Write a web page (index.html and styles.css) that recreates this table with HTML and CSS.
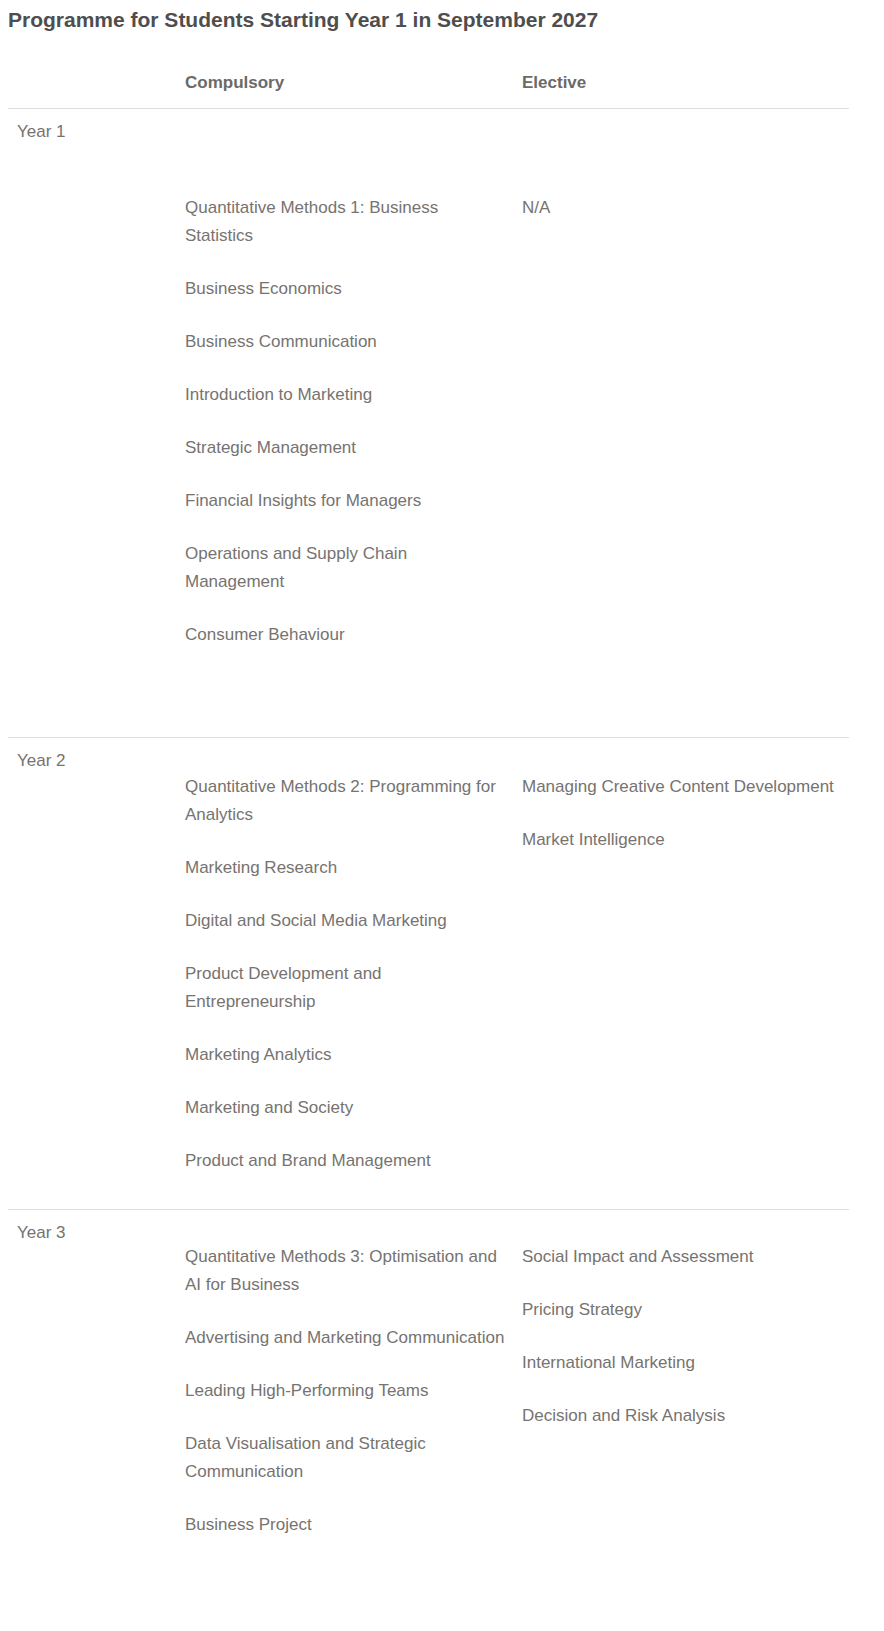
FILE: index.html
```html
<!DOCTYPE html>
<html lang="en">
<head>
<meta charset="utf-8">
<title>Programme for Students Starting Year 1 in September 2027</title>
<link rel="stylesheet" href="styles.css">
</head>
<body>
<h2 class="title">Programme for Students Starting Year 1 in September 2027</h2>
<div class="table">
  <div class="row head">
    <div class="cell year"></div>
    <div class="cell comp">Compulsory</div>
    <div class="cell elec">Elective</div>
  </div>
  <div class="row year1">
    <div class="cell year">Year 1</div>
    <div class="cell comp">
      <p>Quantitative Methods 1: Business Statistics</p>
      <p>Business Economics</p>
      <p>Business Communication</p>
      <p>Introduction to Marketing</p>
      <p>Strategic Management</p>
      <p>Financial Insights for Managers</p>
      <p>Operations and Supply Chain Management</p>
      <p>Consumer Behaviour</p>
    </div>
    <div class="cell elec">
      <p>N/A</p>
    </div>
  </div>
  <div class="row">
    <div class="cell year">Year 2</div>
    <div class="cell comp">
      <p>Quantitative Methods 2: Programming for Analytics</p>
      <p>Marketing Research</p>
      <p>Digital and Social Media Marketing</p>
      <p>Product Development and Entrepreneurship</p>
      <p>Marketing Analytics</p>
      <p>Marketing and Society</p>
      <p>Product and Brand Management</p>
    </div>
    <div class="cell elec">
      <p>Managing Creative Content Development</p>
      <p>Market Intelligence</p>
    </div>
  </div>
  <div class="row year3">
    <div class="cell year">Year 3</div>
    <div class="cell comp">
      <p>Quantitative Methods 3: Optimisation and AI for Business</p>
      <p>Advertising and Marketing Communication</p>
      <p>Leading High-Performing Teams</p>
      <p>Data Visualisation and Strategic Communication</p>
      <p>Business Project</p>
    </div>
    <div class="cell elec">
      <p>Social Impact and Assessment</p>
      <p>Pricing Strategy</p>
      <p>International Marketing</p>
      <p>Decision and Risk Analysis</p>
    </div>
  </div>
</div>
</body>
</html>
```

FILE: styles.css
```css
html, body {
  background: #ffffff;
}
body {
  margin: 8px;
  font-family: "Liberation Sans", Arial, sans-serif;
  color: #767370;
  font-size: 17px;
  line-height: 28px;
}
.title {
  margin: 0;
  font-size: 21px;
  line-height: 24px;
  font-weight: bold;
  color: #4e4e4e;
}
.table {
  width: 841px;
}
.row {
  display: grid;
  grid-template-columns: 177px 337px 327px;
  border-top: 1px solid #dedede;
}
.row.head {
  border-top: none;
  padding: 37px 0 11px;
  font-weight: bold;
  color: #6c6a68;
}
.cell.year {
  padding-left: 9px;
}
.row:not(.head) .cell.year {
  padding-top: 9px;
}
.row:not(.head) .cell.comp,
.row:not(.head) .cell.elec {
  padding-top: 35px;
  padding-bottom: 34px;
}
.row.year1 .cell.comp,
.row.year1 .cell.elec {
  padding-top: 85px;
  padding-bottom: 88px;
}
.row.year3 .cell.comp,
.row.year3 .cell.elec {
  padding-top: 33px;
}
.cell.comp {
  padding-right: 17px;
}
.cell p {
  margin: 0 0 25px;
}
.cell p:last-child {
  margin-bottom: 0;
}
```
